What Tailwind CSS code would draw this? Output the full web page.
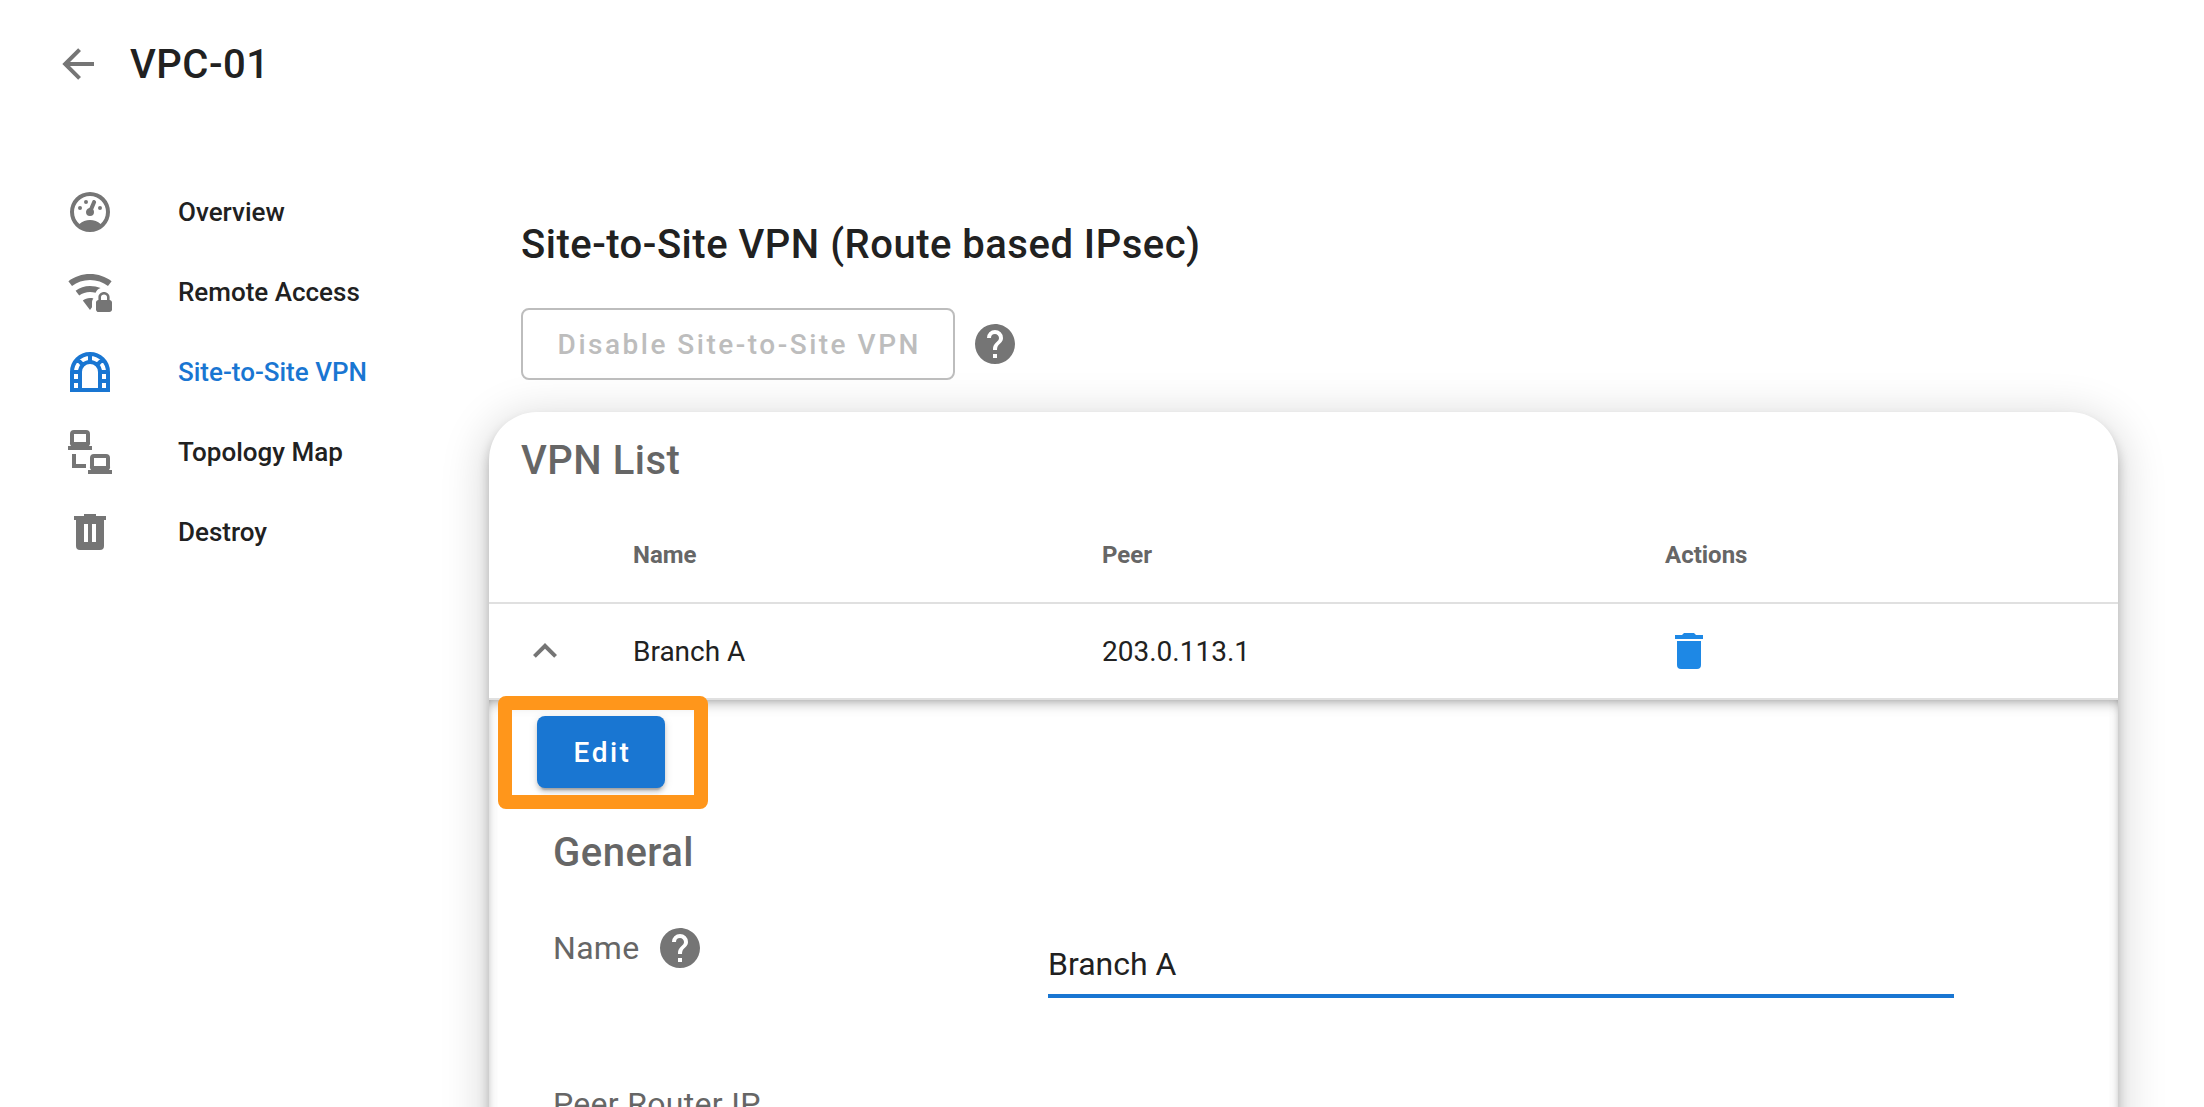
<!DOCTYPE html>
<html lang="en">
<head>
  <meta charset="UTF-8" />
  <meta name="viewport" content="width=device-width, initial-scale=1" />
  <title>VPC-01 - Site-to-Site VPN</title>
  <script src="https://cdn.jsdelivr.net/npm/@tailwindcss/browser@4"></script>
  <style>
    body {
      font-family: Roboto, 'Liberation Sans', sans-serif;
    }
  </style>
</head>
<body class="h-screen overflow-hidden bg-white text-[#212121]">

  <!-- Header -->
  <header class="flex h-32 items-center pl-[54px]">
    <svg class="size-12 fill-[#757575]" viewBox="0 0 24 24"><path d="M20,11V13H8L13.5,18.5L12.08,19.92L4.16,12L12.08,4.08L13.5,5.5L8,11H20Z" /></svg>
    <h1 class="ml-7 pt-0.5 text-[40px] leading-[64px] font-medium tracking-[0.0125em]">VPC-01</h1>
  </header>

  <div class="flex">

    <!-- Sidebar -->
    <nav class="mt-11 w-[489px] shrink-0 pl-[66px] text-[26px] leading-8 font-medium">
      <a href="#" class="flex h-20 items-center gap-16">
        <svg class="size-12 fill-[#757575]" viewBox="0 0 24 24"><path d="M17.3,18C19,16.5 20,14.4 20,12A8,8 0 0,0 12,4A8,8 0 0,0 4,12C4,14.4 5,16.5 6.7,18C8.2,16.7 10,16 12,16C14,16 15.9,16.7 17.3,18M12,2A10,10 0 0,1 22,12A10,10 0 0,1 12,22A10,10 0 0,1 2,12A10,10 0 0,1 12,2M7,9A1,1 0 0,1 8,10A1,1 0 0,1 7,11A1,1 0 0,1 6,10A1,1 0 0,1 7,9M10,6A1,1 0 0,1 11,7A1,1 0 0,1 10,8A1,1 0 0,1 9,7A1,1 0 0,1 10,6M17,9A1,1 0 0,1 18,10A1,1 0 0,1 17,11A1,1 0 0,1 16,10A1,1 0 0,1 17,9M14.4,6.1C14.9,6.3 15.2,6.9 15,7.4L13.6,10.8C13.8,11.1 14,11.5 14,12A2,2 0 0,1 12,14A2,2 0 0,1 10,12C10,11.1 10.7,10.2 11.7,10L13.1,6.7C13.3,6.1 13.9,5.9 14.4,6.1Z" /></svg>
        <span>Overview</span>
      </a>
      <a href="#" class="flex h-20 items-center gap-16">
        <svg class="size-12 fill-[#757575]" viewBox="0 0 24 24"><path d="M12,3C7.95,3 4.21,4.34 1.2,6.6L3,9C5.5,7.12 8.62,6 12,6C15.38,6 18.5,7.12 21,9L22.8,6.6C19.79,4.34 16.05,3 12,3M12,9C9.3,9 6.81,9.89 4.8,11.4L6.6,13.8C8.1,12.67 9.97,12 12,12C12.96,12 13.9,12.15 14.8,12.4C15.2,11.3 16.1,10.5 17.3,10.05C15.7,9.36 13.9,9 12,9M12,15C10.65,15 9.4,15.45 8.4,16.2L12,21L13,19.67V17.2C13,16.4 13.3,15.8 13.7,15.24C13.2,15.08 12.6,15 12,15M21.8,16V14.5C21.8,13.1 20.4,12 19,12C17.6,12 16.2,13.1 16.2,14.5V16C15.6,16 15,16.6 15,17.2V20.7C15,21.4 15.6,22 16.2,22H21.7C22.4,22 23,21.4 23,20.8V17.3C23,16.6 22.4,16 21.8,16M20.5,16H17.5V14.5C17.5,13.7 18.2,13.2 19,13.2C19.8,13.2 20.5,13.7 20.5,14.5V16Z" /></svg>
        <span>Remote Access</span>
      </a>
      <a href="#" class="flex h-20 items-center gap-16 text-[#1976d2]">
        <svg class="size-12 fill-none stroke-current stroke-2" viewBox="0 0 24 24"><path d="M3,21V12A9,9 0 0,1 21,12V21ZM7,21V12A5,5 0 0,1 17,12V21M3,12H7M3,16.5H7M17,12H21M17,16.5H21M12,3V7M5.6,5.6L8.5,8.5M18.4,5.6L15.5,8.5" /></svg>
        <span>Site-to-Site VPN</span>
      </a>
      <a href="#" class="flex h-20 items-center gap-16">
        <svg class="size-12 fill-[#757575]" viewBox="0 0 24 24"><path fill-rule="evenodd" d="M4,1H10A2,2 0 0,1 12,3V7A2,2 0 0,1 11.5,9H13V11H1V9H2.5A2,2 0 0,1 2,7V3A2,2 0 0,1 4,1M4,3V7H10V3ZM14,13H20A2,2 0 0,1 22,15V19A2,2 0 0,1 21.5,21H23V23H11V21H12.5A2,2 0 0,1 12,19V15A2,2 0 0,1 14,13M14,15V19H20V15ZM3,13H5V18H10V20H3Z" /></svg>
        <span>Topology Map</span>
      </a>
      <a href="#" class="flex h-20 items-center gap-16">
        <svg class="size-12 fill-[#757575]" viewBox="0 0 24 24"><path fill-rule="evenodd" d="M9,3V4H4V6H5V19A2,2 0 0,0 7,21H17A2,2 0 0,0 19,19V6H20V4H15V3H9M9,8H11V17H9V8M13,8H15V17H13V8Z" /></svg>
        <span>Destroy</span>
      </a>
    </nav>

    <!-- Content -->
    <main class="mt-[85px] w-[1629px]">
      <h2 class="pl-8 text-[40px] leading-[64px] font-medium tracking-[0.0125em]">Site-to-Site VPN (Route based IPsec)</h2>

      <div class="mt-[31px] flex items-center gap-4 pl-8">
        <button disabled class="h-[72px] w-[433.5px] rounded-lg border-2 border-[#bdbdbd] pt-0.5 pl-[3px] text-[28px] font-medium tracking-[0.0892857em] whitespace-nowrap text-[#bdbdbd]">Disable Site-to-Site VPN</button>
        <svg class="size-12 fill-[#757575]" viewBox="0 0 24 24"><path d="M15.07,11.25L14.17,12.17C13.45,12.89 13,13.5 13,15H11V14.5C11,13.39 11.45,12.39 12.17,11.67L13.41,10.41C13.78,10.05 14,9.55 14,9C14,7.89 13.1,7 12,7A2,2 0 0,0 10,9H8A4,4 0 0,1 12,5A4,4 0 0,1 16,9C16,9.88 15.64,10.67 15.07,11.25M13,19H11V17H13M12,2A10,10 0 0,0 2,12A10,10 0 0,0 12,22A10,10 0 0,0 22,12C22,6.47 17.5,2 12,2Z" /></svg>
      </div>

      <!-- VPN list card -->
      <section class="mt-8 h-[900px] overflow-hidden rounded-[48px] bg-white shadow-[0_8px_12px_0_rgba(0,0,0,0.24),0_8px_44px_6px_rgba(0,0,0,0.15)]">
        <h3 class="h-[94px] px-8 pt-[17px] text-[40px] leading-[64px] font-medium tracking-[0.0125em] text-[#666]">VPN List</h3>

        <div class="grid h-[98px] grid-cols-[144px_469px_563px_1fr] items-center border-b-2 border-[#e0e0e0] pt-0.5 text-2xl font-bold text-[#666]">
          <span></span>
          <span>Name</span>
          <span>Peer</span>
          <span>Actions</span>
        </div>
        <div class="grid h-24 grid-cols-[144px_469px_563px_1fr] items-center border-b-2 border-[#e0e0e0] text-[28px]">
          <svg class="ml-8 size-12 fill-[#757575]" viewBox="0 0 24 24"><path d="M7.41,15.41L12,10.83L16.59,15.41L18,14L12,8L6,14L7.41,15.41Z" /></svg>
          <span class="pt-0.5">Branch A</span>
          <span class="pt-0.5">203.0.113.1</span>
          <svg class="size-12 fill-[#1e88e5]" viewBox="0 0 24 24"><path d="M19,4H15.5L14.5,3H9.5L8.5,4H5V6H19M6,19A2,2 0 0,0 8,21H16A2,2 0 0,0 18,19V7H6V19Z" /></svg>
        </div>

        <!-- Expanded row -->
        <div class="relative h-[612px] px-12 pt-4 shadow-[inset_0_8px_16px_-10px_rgba(50,50,50,0.75),inset_0_-8px_16px_-10px_rgba(50,50,50,0.75)]">
          <div class="absolute -top-1 left-[9px] h-[113px] w-[210px] rounded-lg border-14 border-[#ff961b]"></div>
          <button class="block h-[72px] w-32 rounded-lg bg-[#1976d2] pt-0.5 pl-[3px] text-[28px] font-medium tracking-[0.0892857em] text-white shadow-[0_6px_2px_-4px_rgba(0,0,0,0.2),0_4px_4px_0_rgba(0,0,0,0.14),0_2px_10px_0_rgba(0,0,0,0.12)]">Edit</button>

          <div class="px-4 text-[32px] text-[#666]">
            <h4 class="mt-[33px] text-[40px] leading-[64px] font-medium tracking-[0.0125em]">General</h4>
            <div class="mt-[31px] flex h-[156px]">
              <div class="flex w-[495px] gap-[16.5px]">
                <label class="leading-[64px] tracking-[0.009375em]">Name</label>
                <svg class="mt-2 size-12 fill-[#757575]" viewBox="0 0 24 24"><path d="M15.07,11.25L14.17,12.17C13.45,12.89 13,13.5 13,15H11V14.5C11,13.39 11.45,12.39 12.17,11.67L13.41,10.41C13.78,10.05 14,9.55 14,9C14,7.89 13.1,7 12,7A2,2 0 0,0 10,9H8A4,4 0 0,1 12,5A4,4 0 0,1 16,9C16,9.88 15.64,10.67 15.07,11.25M13,19H11V17H13M12,2A10,10 0 0,0 2,12A10,10 0 0,0 12,22A10,10 0 0,0 22,12C22,6.47 17.5,2 12,2Z" /></svg>
              </div>
              <div class="mt-4 h-[66px] w-[906px] border-b-4 border-[#1976d2] leading-[64px] text-[#212121]">Branch A</div>
            </div>
            <label class="leading-[64px] tracking-[0.009375em]">Peer Router IP</label>
          </div>
        </div>
      </section>
    </main>
  </div>

</body>
</html>
